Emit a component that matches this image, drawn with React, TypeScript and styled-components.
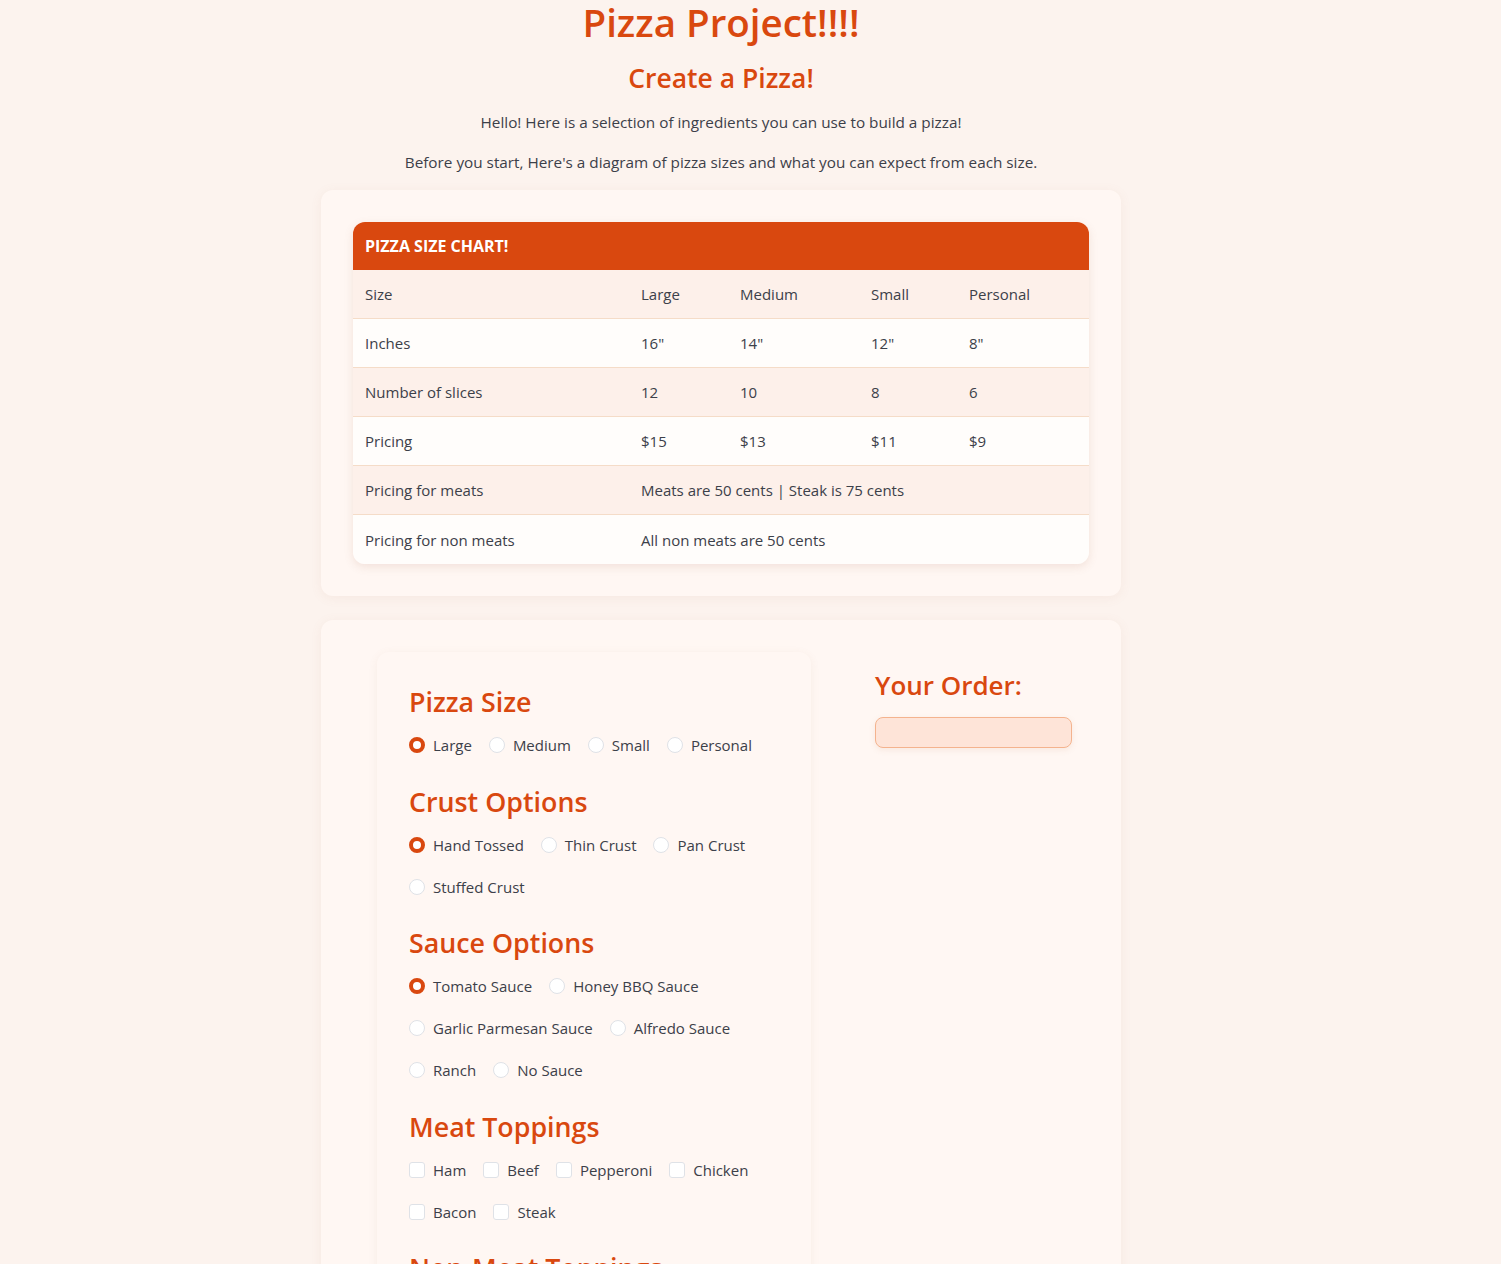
import React from "react";
import styled, { createGlobalStyle } from "styled-components";

const ORANGE = "#d9480f";
const TEXT = "#3c4049";
const FONT = `"Open Sans", "Noto Sans", "Liberation Sans", sans-serif`;

const GlobalStyle = createGlobalStyle`
  html, body {
    margin: 0;
    padding: 0;
    background: #fcf3ee;
  }
  body {
    font-family: ${FONT};
    color: ${TEXT};
  }
  * { box-sizing: border-box; }
`;

const Page = styled.main`
  width: 1442px;
  display: flex;
  flex-direction: column;
  align-items: center;
  padding-bottom: 40px;
`;

const Title = styled.h1`
  margin: 0;
  font-size: 38.5px;
  line-height: 44px;
  font-weight: 600;
  color: ${ORANGE};
  text-align: center;
`;

const Subtitle = styled.h2`
  margin: 17px 0 0;
  font-size: 26.5px;
  line-height: 34px;
  font-weight: 600;
  color: ${ORANGE};
  text-align: center;
`;

const Intro = styled.p<{ $first?: boolean }>`
  margin: ${(p) => (p.$first ? "16px" : "18px")} 0 0;
  font-size: 15.3px;
  line-height: 22px;
  text-align: center;
  color: ${TEXT};
`;

const Card = styled.section<{ $top: number }>`
  width: 800px;
  margin-top: ${(p) => p.$top}px;
  background: #fff7f3;
  border-radius: 12px;
  box-shadow: 0 2px 12px rgba(180, 120, 90, 0.08);
`;

const ChartCard = styled(Card)`
  padding: 32px;
`;

const Table = styled.table`
  width: 736px;
  border-collapse: separate;
  border-spacing: 0;
  border-radius: 12px;
  overflow: hidden;
  box-shadow: 0 3px 10px rgba(160, 100, 70, 0.14);
  font-size: 15px;
  table-layout: fixed;
`;

const HeadCell = styled.th`
  height: 48px;
  padding: 0 12px;
  background: ${ORANGE};
  color: #ffffff;
  font-size: 16px;
  font-weight: 700;
  text-align: left;
  text-transform: uppercase;
`;

const Row = styled.tr<{ $alt: boolean }>`
  background: ${(p) => (p.$alt ? "#fdf0ea" : "#fffdfb")};
`;

const Cell = styled.td<{ $last?: boolean }>`
  height: 49px;
  padding: 0 12px;
  color: ${TEXT};
  border-bottom: ${(p) => (p.$last ? "none" : "1px solid #f5dcc8")};
  vertical-align: middle;
`;

const BuilderCard = styled(Card)`
  display: flex;
  align-items: flex-start;
  gap: 64px;
  padding: 32px 49px 32px 56px;
`;

const FormCard = styled.form`
  width: 434px;
  flex: none;
  padding: 33px 32px 32px;
  background: #fff7f3;
  border-radius: 12px;
  box-shadow: 0 2px 10px rgba(170, 110, 80, 0.08);
  display: flex;
  flex-direction: column;
  gap: 26.5px;
`;

const Section = styled.fieldset`
  margin: 0;
  padding: 0;
  border: none;
  display: flex;
  flex-direction: column;
  gap: 13px;
`;

const SectionTitle = styled.h3`
  margin: 0;
  font-size: 26.8px;
  line-height: 34px;
  font-weight: 600;
  color: ${ORANGE};
`;

const Options = styled.div`
  display: flex;
  flex-wrap: wrap;
  column-gap: 17px;
  row-gap: 16px;
`;

const Option = styled.label`
  display: flex;
  align-items: center;
  gap: 8px;
  height: 26px;
  font-size: 15px;
  color: ${TEXT};
`;

const RadioMark = styled.span<{ $on: boolean }>`
  width: 16px;
  height: 16px;
  border-radius: 50%;
  background: #ffffff;
  border: ${(p) => (p.$on ? `4px solid ${ORANGE}` : "1px solid #dfe2e7")};
  flex: none;
`;

const CheckMark = styled.span`
  width: 16px;
  height: 16px;
  border-radius: 3px;
  background: #ffffff;
  border: 1px solid #dfe2e7;
  flex: none;
`;

const OrderPanel = styled.aside`
  padding-top: 16px;
  display: flex;
  flex-direction: column;
  gap: 15px;
`;

const OrderTitle = styled.h3`
  margin: 0;
  font-size: 26px;
  line-height: 34px;
  font-weight: 600;
  color: ${ORANGE};
`;

const OrderBox = styled.div`
  width: 197px;
  height: 31px;
  background: #fee4d8;
  border: 1px solid #f4b38e;
  border-radius: 8px;
  box-shadow: 0 2px 6px rgba(200, 120, 80, 0.12);
`;

type Choice = { label: string; on?: boolean };

const sections: { title: string; kind: "radio" | "check"; items: Choice[] }[] = [
  {
    title: "Pizza Size",
    kind: "radio",
    items: [{ label: "Large", on: true }, { label: "Medium" }, { label: "Small" }, { label: "Personal" }],
  },
  {
    title: "Crust Options",
    kind: "radio",
    items: [{ label: "Hand Tossed", on: true }, { label: "Thin Crust" }, { label: "Pan Crust" }, { label: "Stuffed Crust" }],
  },
  {
    title: "Sauce Options",
    kind: "radio",
    items: [
      { label: "Tomato Sauce", on: true },
      { label: "Honey BBQ Sauce" },
      { label: "Garlic Parmesan Sauce" },
      { label: "Alfredo Sauce" },
      { label: "Ranch" },
      { label: "No Sauce" },
    ],
  },
  {
    title: "Meat Toppings",
    kind: "check",
    items: [
      { label: "Ham" },
      { label: "Beef" },
      { label: "Pepperoni" },
      { label: "Chicken" },
      { label: "Bacon" },
      { label: "Steak" },
    ],
  },
  {
    title: "Non-Meat Toppings",
    kind: "check",
    items: [
      { label: "Mushrooms" },
      { label: "Onions" },
      { label: "Green Peppers" },
      { label: "Black Olives" },
      { label: "Pineapple" },
      { label: "Extra Cheese" },
    ],
  },
];

const chartRows: string[][] = [
  ["Size", "Large", "Medium", "Small", "Personal"],
  ["Inches", "16\"", "14\"", "12\"", "8\""],
  ["Number of slices", "12", "10", "8", "6"],
  ["Pricing", "$15", "$13", "$11", "$9"],
  ["Pricing for meats", "Meats are 50 cents | Steak is 75 cents"],
  ["Pricing for non meats", "All non meats are 50 cents"],
];

const colWidths = [276, 99, 131, 98, 132];

export default function App() {
  return (
    <>
      <GlobalStyle />
      <Page>
        <Title>Pizza Project!!!!</Title>
        <Subtitle>Create a Pizza!</Subtitle>
        <Intro $first>Hello! Here is a selection of ingredients you can use to build a pizza!</Intro>
        <Intro>Before you start, Here's a diagram of pizza sizes and what you can expect from each size.</Intro>

        <ChartCard $top={17}>
          <Table>
            <colgroup>
              {colWidths.map((w, i) => (
                <col key={i} style={{ width: w }} />
              ))}
            </colgroup>
            <thead>
              <tr>
                <HeadCell colSpan={5}>Pizza Size Chart!</HeadCell>
              </tr>
            </thead>
            <tbody>
              {chartRows.map((r, ri) => {
                const last = ri === chartRows.length - 1;
                return (
                  <Row key={ri} $alt={ri % 2 === 0}>
                    <Cell $last={last}>{r[0]}</Cell>
                    {r.length === 2 ? (
                      <Cell $last={last} colSpan={4}>
                        {r[1]}
                      </Cell>
                    ) : (
                      r.slice(1).map((c, ci) => (
                        <Cell $last={last} key={ci}>
                          {c}
                        </Cell>
                      ))
                    )}
                  </Row>
                );
              })}
            </tbody>
          </Table>
        </ChartCard>

        <BuilderCard $top={24}>
          <FormCard onSubmit={(e) => e.preventDefault()}>
            {sections.map((s) => (
              <Section key={s.title}>
                <SectionTitle>{s.title}</SectionTitle>
                <Options>
                  {s.items.map((it) => (
                    <Option key={it.label}>
                      {s.kind === "radio" ? <RadioMark $on={!!it.on} /> : <CheckMark />}
                      {it.label}
                    </Option>
                  ))}
                </Options>
              </Section>
            ))}
          </FormCard>
          <OrderPanel>
            <OrderTitle>Your Order:</OrderTitle>
            <OrderBox />
          </OrderPanel>
        </BuilderCard>
      </Page>
    </>
  );
}
